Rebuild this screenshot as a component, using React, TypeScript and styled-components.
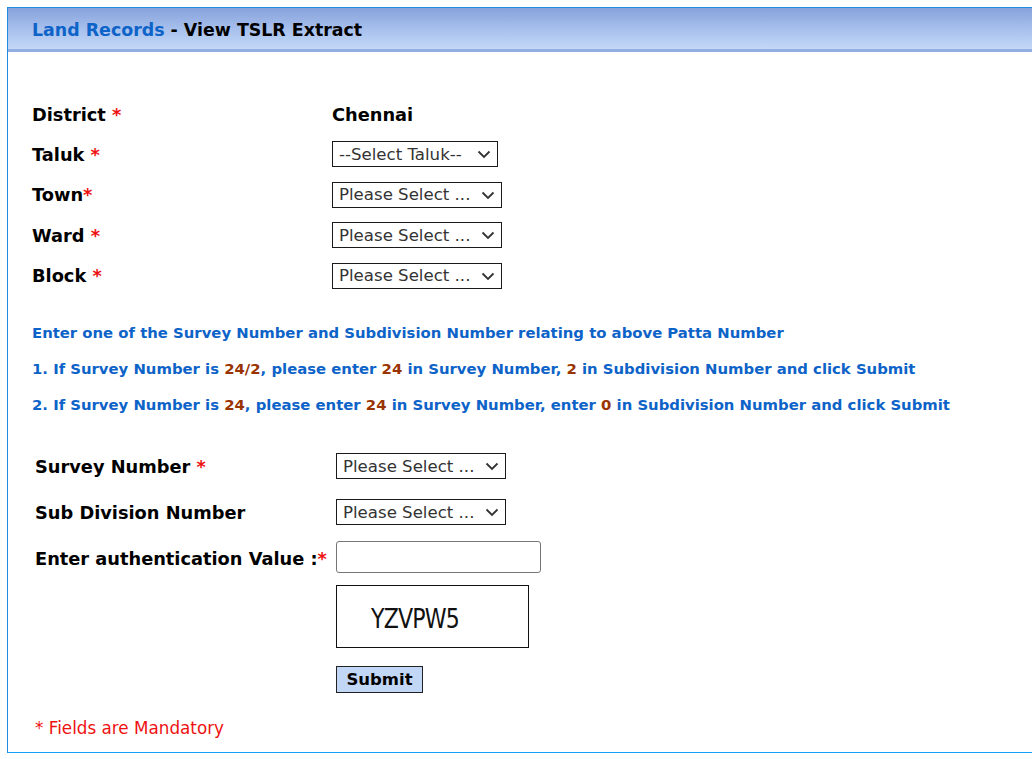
import React from 'react';
import styled, { createGlobalStyle } from 'styled-components';

const GlobalStyle = createGlobalStyle`
  html, body {
    margin: 0;
    padding: 0;
    background: #ffffff;
    overflow: hidden;
  }
  body {
    font-family: 'DejaVu Sans', Verdana, sans-serif;
    color: #000;
  }
`;

const Panel = styled.div`
  margin: 7px 0 0 7px;
  width: 1060px;
  border: 1px solid #1f8ee0;
  border-bottom-color: #12a0f5;
  border-right: none;
  padding-bottom: 14px;
`;

const Header = styled.div`
  height: 38px;
  background: linear-gradient(to bottom, #87a2dc 0%, #a6bfec 50%, #c4d8f8 100%);
  border-bottom: 3px solid #93afe2;
  display: flex;
  align-items: center;
  padding: 3px 0 0 24px;
  font-size: 17.4px;
  font-weight: bold;
`;

const HeaderLink = styled.span`
  color: #0d63c8;
`;

const Body = styled.div`
  padding: 42px 0 0 24px;
`;

const FormGrid = styled.div<{ $labelWidth: number }>`
  display: grid;
  grid-template-columns: ${p => p.$labelWidth}px auto;
  align-items: center;
`;

const Label = styled.div<{ $h: number }>`
  height: ${p => p.$h}px;
  display: flex;
  align-items: center;
  font-size: 17.8px;
  font-weight: bold;
  white-space: nowrap;
`;

const Cell = styled.div<{ $h: number }>`
  height: ${p => p.$h}px;
  display: flex;
  align-items: center;
`;

const Star = styled.span`
  color: #ee1111;
`;

const StaticValue = styled.span`
  font-size: 17.8px;
  font-weight: bold;
`;

const SelectWrap = styled.div<{ $w: number }>`
  position: relative;
  width: ${p => p.$w}px;
  height: 26px;
  box-sizing: border-box;
  border: 1px solid #1a1a1a;
  background: #fff;
`;

const NativeSelect = styled.select`
  appearance: none;
  -webkit-appearance: none;
  border: none;
  background: transparent;
  width: 100%;
  height: 100%;
  padding: 0 0 0 6px;
  margin: 0;
  font-family: 'DejaVu Sans', Verdana, sans-serif;
  font-size: 16.6px;
  color: #333;
  outline: none;
`;

const Chevron = styled.svg`
  position: absolute;
  right: 6px;
  top: 8px;
  pointer-events: none;
`;

const Notes = styled.div`
  margin-top: 28px;
  display: flex;
  flex-direction: column;
  gap: 17px;
  color: #0d63c8;
  font-size: 14.85px;
  font-weight: bold;
  line-height: 19px;
`;

const Num = styled.span`
  color: #993300;
`;

const SecondForm = styled.div`
  margin: 28px 0 0 3px;
`;

const TextInput = styled.input`
  width: 205px;
  height: 32px;
  box-sizing: border-box;
  border: 1px solid #767676;
  border-radius: 3px;
  margin-top: -2px;
`;

const Captcha = styled.div`
  width: 193px;
  height: 63px;
  box-sizing: border-box;
  border: 1px solid #111;
  display: flex;
  align-items: center;
  padding: 4px 0 0 34px;
  margin-top: 4px;
`;

const CaptchaText = styled.span`
  display: inline-block;
  font-family: 'DejaVu Sans', sans-serif;
  font-size: 26px;
  letter-spacing: -1px;
  color: #111;
  transform: scaleX(0.85);
  transform-origin: left center;
`;

const SubmitButton = styled.button`
  margin-top: 18px;
  width: 87px;
  height: 27px;
  border: 1px solid #222;
  background: #c2d6f6;
  font-family: 'DejaVu Sans', Verdana, sans-serif;
  font-size: 16.5px;
  font-weight: bold;
  color: #000;
  padding: 0;
`;

const Mandatory = styled.div`
  margin-top: 25px;
  color: #ee1111;
  font-size: 16.8px;
`;

const Select: React.FC<{ width: number; placeholder: string }> = ({ width, placeholder }) => (
  <SelectWrap $w={width}>
    <NativeSelect defaultValue="">
      <option value="">{placeholder}</option>
    </NativeSelect>
    <Chevron width="14" height="9" viewBox="0 0 14 9">
      <path d="M1.5 1.5 L7 7 L12.5 1.5" fill="none" stroke="#333" strokeWidth="1.8" />
    </Chevron>
  </SelectWrap>
);

const topRows = [
  { label: 'Taluk\u00a0', placeholder: '--Select Taluk--', width: 166 },
  { label: 'Town', placeholder: 'Please Select ...', width: 170 },
  { label: 'Ward\u00a0', placeholder: 'Please Select ...', width: 170 },
  { label: 'Block\u00a0', placeholder: 'Please Select ...', width: 170 },
];

export default function App() {
  return (
    <>
      <GlobalStyle />
      <Panel>
        <Header>
          <HeaderLink>Land Records</HeaderLink>&nbsp;- View TSLR Extract
        </Header>
        <Body>
          <FormGrid $labelWidth={300}>
            <Label $h={40}>District&nbsp;<Star>*</Star></Label>
            <Cell $h={40}><StaticValue>Chennai</StaticValue></Cell>
            {topRows.map(r => (
              <React.Fragment key={r.label}>
                <Label $h={40.5}>{r.label}<Star>*</Star></Label>
                <Cell $h={40.5}><Select width={r.width} placeholder={r.placeholder} /></Cell>
              </React.Fragment>
            ))}
          </FormGrid>

          <Notes>
            <div>Enter one of the Survey Number and Subdivision Number relating to above Patta Number</div>
            <div>
              1. If Survey Number is <Num>24/2</Num>, please enter <Num>24</Num> in Survey Number, <Num>2</Num> in Subdivision Number and click Submit
            </div>
            <div>
              2. If Survey Number is <Num>24</Num>, please enter <Num>24</Num> in Survey Number, enter <Num>0</Num> in Subdivision Number and click Submit
            </div>
          </Notes>

          <SecondForm>
            <FormGrid $labelWidth={301}>
              <Label $h={46}>Survey Number&nbsp;<Star>*</Star></Label>
              <Cell $h={46}><Select width={170} placeholder="Please Select ..." /></Cell>
              <Label $h={46}>Sub Division Number</Label>
              <Cell $h={46}><Select width={170} placeholder="Please Select ..." /></Cell>
              <Label $h={46}>Enter authentication Value :<Star>*</Star></Label>
              <Cell $h={46}><TextInput type="text" /></Cell>
              <div />
              <div>
                <Captcha><CaptchaText>YZVPW5</CaptchaText></Captcha>
                <SubmitButton type="button">Submit</SubmitButton>
              </div>
            </FormGrid>
            <Mandatory>* Fields are Mandatory</Mandatory>
          </SecondForm>
        </Body>
      </Panel>
    </>
  );
}
